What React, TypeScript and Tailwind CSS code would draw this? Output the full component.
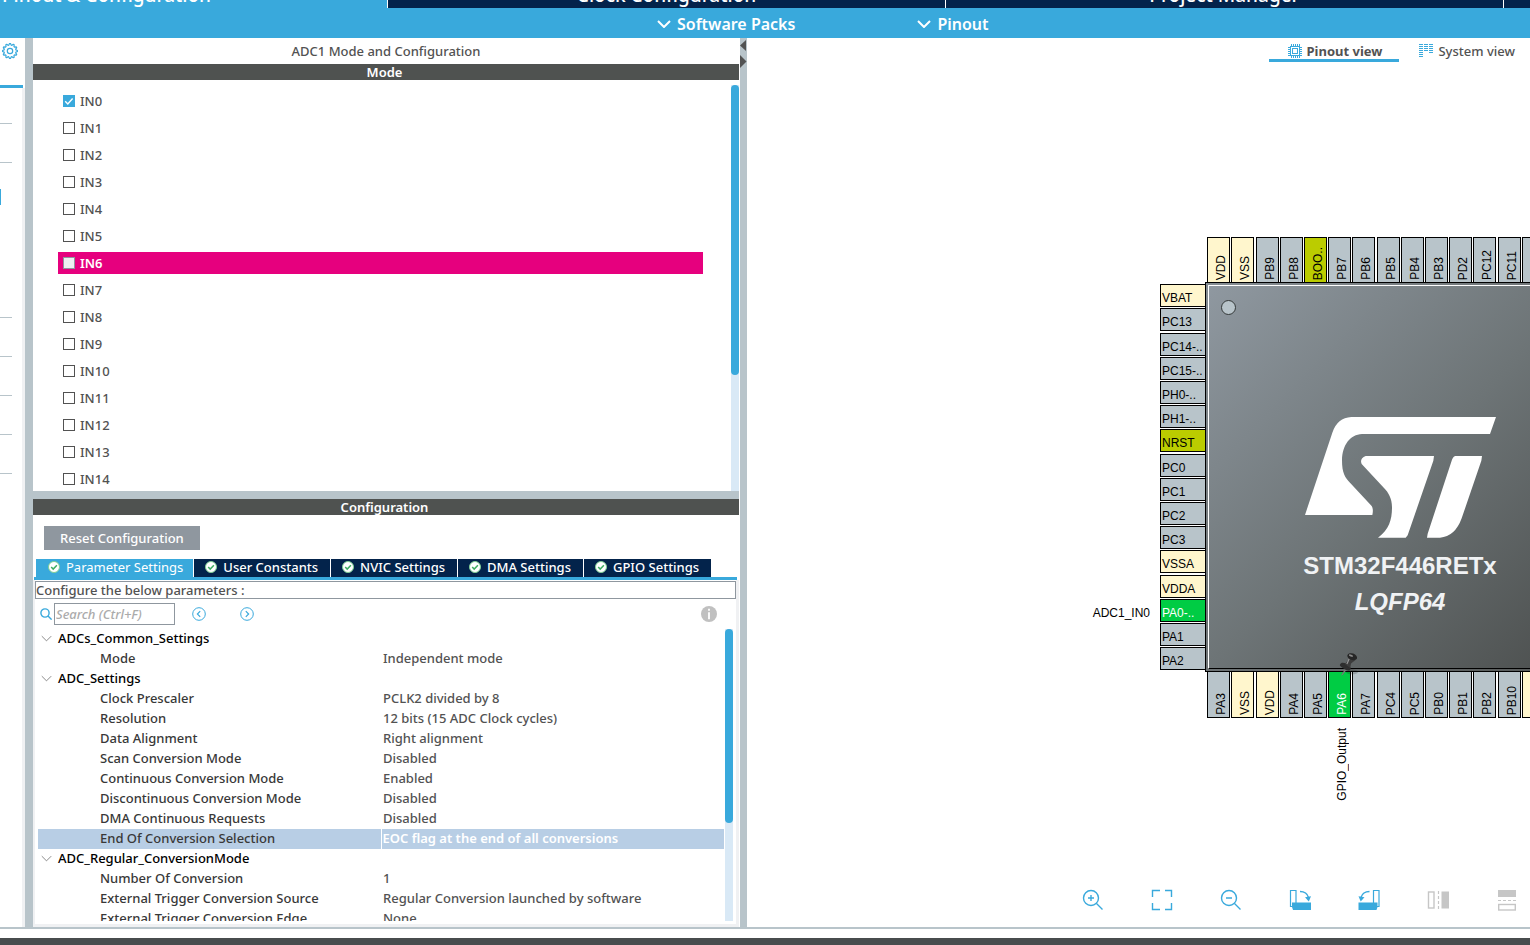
import React from "react";

const GRAY = "bg-[#b8c4ca]";

const GEAR_PATH = (() => {
  const points: string[] = [];
  const teeth = 12;
  for (let i = 0; i < teeth * 4; i++) {
    const angle = ((i - 0.5) / (teeth * 4)) * Math.PI * 2;
    const r = i % 4 < 2 ? 7.5 : 6;
    points.push(`${(8 + r * Math.cos(angle)).toFixed(2)},${(8 + r * Math.sin(angle)).toFixed(2)}`);
  }
  return `M${points.join("L")}Z`;
})();

function GearIcon() {
  return (
    <svg width="16" height="16" viewBox="0 0 16 16" fill="none" stroke="#39a9dc" strokeLinejoin="round">
      <path d={GEAR_PATH} strokeWidth="1.2" />
      <circle cx="8" cy="8" r="2.7" strokeWidth="1.2" />
    </svg>
  );
}

function Chevron({ className }: { className: string }) {
  return (
    <svg className={className} viewBox="0 0 14 8" fill="none" stroke="currentColor">
      <path d="M1 1l6 6 6-6" />
    </svg>
  );
}

function OkIcon() {
  return (
    <svg className="size-3 shrink-0" viewBox="0 0 12 12">
      <circle cx="6" cy="6" r="5.5" fill="#fff" stroke="#7fcf94" />
      <path d="M3.2 6l2 2.1 3.7-3.9" fill="none" stroke="#3fae62" strokeWidth="1.5" />
    </svg>
  );
}

const mainTabs = [
  { label: "Pinout & Configuration", active: true },
  { label: "Clock Configuration", active: false },
  { label: "Project Manager", active: false },
];

function Header() {
  return (
    <header className="shrink-0 text-white">
      <nav className="grid h-2 grid-cols-[388fr_558fr_558fr_26fr] overflow-hidden bg-[#03234b] text-[19px] font-medium">
        {mainTabs.map((t) => (
          <button
            key={t.label}
            className={
              t.active
                ? "flex h-2 items-end justify-start border-r border-white bg-[#39a9dc] pl-[2px] leading-[26px]"
                : "flex h-2 items-end justify-center border-r border-white leading-[26px]"
            }
          >
            {t.label}
          </button>
        ))}
        <span />
      </nav>
      <div className="flex h-[30px] items-center gap-[122px] bg-[#39a9dc] pt-px pl-[657px] font-semibold">
        {["Software Packs", "Pinout"].map((m) => (
          <button key={m} className="flex items-center gap-[6px] text-base">
            <Chevron className="h-2 w-[14px] stroke-2" />
            {m}
          </button>
        ))}
      </div>
    </header>
  );
}

function Sidebar() {
  return (
    <aside className="flex w-[25px] shrink-0 flex-col">
      <div className="h-[47px] shrink-0 pt-[5px] pl-[2px]">
        <button aria-label="Settings" className="block">
          <GearIcon />
        </button>
      </div>
      <div className="mr-[2px] h-[3px] shrink-0 bg-[#39a9dc]" />
      <div className="min-h-0 flex-1 border-r-[3px] border-[#f0f1f3] pr-[10px]">
        <div className="h-9 border-b border-[#b8c4ca]" />
        <div className="h-[39px] border-b border-[#b8c4ca]" />
        <div className="h-[155px] border-b border-[#b8c4ca] pt-[26px]">
          <div className="h-4 w-px bg-[#39a9dc]" />
        </div>
        <div className="h-[39px] border-b border-[#b8c4ca]" />
        <div className="h-[39px] border-b border-[#b8c4ca]" />
        <div className="h-[39px] border-b border-[#b8c4ca]" />
        <div className="h-[39px] border-b border-[#b8c4ca]" />
      </div>
    </aside>
  );
}

const channels = Array.from({ length: 15 }, (_, i) => `IN${i}`);

function ModePanel() {
  return (
    <section className="mr-px flex min-h-0 flex-[453] flex-col">
      <h1 className="h-[26px] shrink-0 text-center leading-[26px] font-medium text-[#525252]">ADC1 Mode and Configuration</h1>
      <h2 className="h-4 shrink-0 bg-[#4f5250] pr-[3px] text-center leading-4 font-semibold text-white">Mode</h2>
      <div className="flex min-h-0 flex-1 overflow-hidden">
        <ul className="flex flex-1 flex-col gap-[5px] pt-[10px] pr-7 pl-[25px]">
          {channels.map((c, i) => (
            <li key={c} className={i === 6 ? "bg-[#e6007e] font-semibold text-white" : "font-medium text-[#525252]"}>
              <label className="flex h-[22px] items-center gap-[5px] pl-[5px]">
                <span className="relative flex size-3">
                  <input
                    type="checkbox"
                    defaultChecked={i === 0}
                    className={
                      i === 6
                        ? "size-3 appearance-none border border-[#8f979f] bg-[#eef0f2]"
                        : "size-3 appearance-none border border-[#525252] bg-white checked:border-[#39a9dc] checked:bg-[#39a9dc]"
                    }
                  />
                  {i === 0 && (
                    <svg className="pointer-events-none absolute inset-0 size-3" viewBox="0 0 12 12" fill="none" stroke="#fff" strokeWidth="1.4">
                      <path d="M2.2 6.2l2.6 2.7 4.8-5.4" />
                    </svg>
                  )}
                </span>
                <span className="leading-5">{c}</span>
              </label>
            </li>
          ))}
        </ul>
        <div className="mt-[5px] w-2 bg-[#d9e9f6]">
          <div className="h-[290px] rounded-full bg-[#39a9dc]" />
        </div>
      </div>
    </section>
  );
}

const configTabs = ["Parameter Settings", "User Constants", "NVIC Settings", "DMA Settings", "GPIO Settings"];

type Row = { name: string; value?: string; selected?: boolean };

const rows: Row[] = [
  { name: "ADCs_Common_Settings" },
  { name: "Mode", value: "Independent mode" },
  { name: "ADC_Settings" },
  { name: "Clock Prescaler", value: "PCLK2 divided by 8" },
  { name: "Resolution", value: "12 bits (15 ADC Clock cycles)" },
  { name: "Data Alignment", value: "Right alignment" },
  { name: "Scan Conversion Mode", value: "Disabled" },
  { name: "Continuous Conversion Mode", value: "Enabled" },
  { name: "Discontinuous Conversion Mode", value: "Disabled" },
  { name: "DMA Continuous Requests", value: "Disabled" },
  { name: "End Of Conversion Selection", value: "EOC flag at the end of all conversions", selected: true },
  { name: "ADC_Regular_ConversionMode" },
  { name: "Number Of Conversion", value: "1" },
  { name: "External Trigger Conversion Source", value: "Regular Conversion launched by software" },
  { name: "External Trigger Conversion Edge", value: "None" },
];

function ParameterTable() {
  return (
    <table className="w-full table-fixed border-collapse">
      <tbody className="leading-[18px] font-medium">
        {rows.map((r) =>
          r.value === undefined ? (
            <tr key={r.name} className="h-5">
              <th colSpan={2} scope="rowgroup" className="p-0 text-left align-top font-medium text-black">
                <button className="flex items-center gap-[6px] pl-[3px]">
                  <Chevron className="h-[7px] w-[11px] text-[#6b6b6b]" />
                  {r.name}
                </button>
              </th>
            </tr>
          ) : (
            <tr key={r.name} className={r.selected ? "h-5 bg-[#b8cee5]" : "h-5"}>
              <th
                scope="row"
                className={
                  r.selected
                    ? "border-r border-white p-0 pl-[62px] text-left align-top font-medium text-[#383838]"
                    : "p-0 pl-[62px] text-left align-top font-medium text-[#383838]"
                }
              >
                {r.name}
              </th>
              <td className={r.selected ? "p-0 pl-px align-top font-semibold text-white" : "p-0 pl-[2px] align-top text-[#525252]"}>{r.value}</td>
            </tr>
          ),
        )}
      </tbody>
    </table>
  );
}

function ConfigPanel() {
  return (
    <section className="mr-px flex min-h-0 flex-[428] flex-col">
      <h2 className="h-4 shrink-0 bg-[#4f5250] pr-[3px] text-center leading-4 font-semibold text-white">Configuration</h2>
      <div className="shrink-0 pt-[11px] pl-[11px]">
        <button className="block h-6 bg-[#8f979f] px-4 pt-px font-medium text-white">Reset Configuration</button>
      </div>
      <div className="mt-[9px] mr-[2px] ml-px flex shrink-0 gap-px border-b-[3px] border-[#39a9dc] pl-[2px]">
        {configTabs.map((t, i) => (
          <button
            key={t}
            className={
              i === 0
                ? "flex h-[18px] items-center gap-[6px] bg-[#39a9dc] pr-[10px] pb-[2px] pl-3 leading-4 text-white"
                : "flex h-[18px] items-center gap-[6px] bg-[#03234b] pr-3 pb-[2px] pl-[11px] leading-4 font-medium text-white"
            }
          >
            <OkIcon />
            {t}
          </button>
        ))}
      </div>
      <div className="flex min-h-0 flex-1 flex-col border-r-[3px] border-b-[3px] border-l-2 border-[#f0f1f3] pb-[3px]">
        <p className="mt-px h-[18px] shrink-0 border border-[#8f979f] leading-4 font-medium text-[#525252]">Configure the below parameters :</p>
        <div className="flex h-[30px] shrink-0 items-center pr-[19px] pl-[5px]">
          <svg className="mr-[2px] size-3" viewBox="0 0 12 12" fill="none" stroke="#39a9dc" strokeWidth="1.4">
            <circle cx="5" cy="5" r="4.1" />
            <path d="M8 8l3.6 3.6" />
          </svg>
          <input
            type="search"
            aria-label="Search parameters"
            placeholder="Search (Ctrl+F)"
            className="h-[22px] w-[121px] border border-[#8f979f] px-px font-medium italic placeholder:text-[#ababab]"
          />
          <button aria-label="Previous match" className="ml-[17px]">
            <svg className="size-[14px]" viewBox="0 0 14 14" fill="none" stroke="#39a9dc">
              <circle cx="7" cy="7" r="6.3" />
              <path d="M8.2 4.2L5.4 7l2.8 2.8" strokeWidth="1.2" />
            </svg>
          </button>
          <button aria-label="Next match" className="ml-[34px]">
            <svg className="size-[14px]" viewBox="0 0 14 14" fill="none" stroke="#39a9dc">
              <circle cx="7" cy="7" r="6.3" />
              <path d="M5.8 4.2L8.6 7 5.8 9.8" strokeWidth="1.2" />
            </svg>
          </button>
          <button aria-label="Information" className="ml-auto">
            <svg className="size-4" viewBox="0 0 16 16">
              <circle cx="8" cy="8" r="8" fill="#c0c0c0" />
              <path d="M8 6.2v7M8 2.8v2" stroke="#fff" strokeWidth="1.8" />
            </svg>
          </button>
        </div>
        <div className="flex min-h-0 flex-1 gap-px overflow-hidden px-[3px]">
          <div className="min-w-0 flex-1 overflow-hidden">
            <ParameterTable />
          </div>
          <div className="w-2 bg-[#d9e9f6]">
            <div className="h-[194px] rounded-full bg-[#39a9dc]" />
          </div>
        </div>
      </div>
    </section>
  );
}

type PinKind = "io" | "power" | "reset" | "active";
type PinDef = [label: string, kind: PinKind];

const pinColors: Record<PinKind, string> = {
  io: "bg-[#b8c4ca] text-black",
  power: "bg-[#fff6cd] text-black",
  reset: "bg-[#bbcc00] text-black",
  active: "bg-[#00cc44] text-white",
};

const topPins: PinDef[] = [
  ["VDD", "power"], ["VSS", "power"], ["PB9", "io"], ["PB8", "io"], ["BOO..", "reset"], ["PB7", "io"], ["PB6", "io"],
  ["PB5", "io"], ["PB4", "io"], ["PB3", "io"], ["PD2", "io"], ["PC12", "io"], ["PC11", "io"], ["", "io"],
];
const leftPins: PinDef[] = [
  ["VBAT", "power"], ["PC13", "io"], ["PC14-..", "io"], ["PC15-..", "io"], ["PH0-..", "io"], ["PH1-..", "io"],
  ["NRST", "reset"], ["PC0", "io"], ["PC1", "io"], ["PC2", "io"], ["PC3", "io"], ["VSSA", "power"], ["VDDA", "power"],
  ["PA0-..", "active"], ["PA1", "io"], ["PA2", "io"],
];
const bottomPins: PinDef[] = [
  ["PA3", "io"], ["VSS", "power"], ["VDD", "power"], ["PA4", "io"], ["PA5", "io"], ["PA6", "active"], ["PA7", "io"],
  ["PC4", "io"], ["PC5", "io"], ["PB0", "io"], ["PB1", "io"], ["PB2", "io"], ["PB10", "io"], ["", "power"],
];

const pinOffset = (i: number) => Math.round(i * 24.2 + 0.15);

function ChipDiagram() {
  return (
    <div className="absolute top-[199px] left-[413px] size-[481px] font-['Liberation_Sans',sans-serif] text-xs text-black">
      {topPins.map(([label, kind], i) => (
        <div
          key={i}
          className={`absolute top-0 flex h-[46px] w-[23px] items-end border border-black pb-[2px] pl-[5px] ${pinColors[kind]}`}
          style={{ left: 47 + pinOffset(i) }}
        >
          <span className="rotate-180 leading-4 [writing-mode:vertical-rl]">{label}</span>
        </div>
      ))}
      {bottomPins.map(([label, kind], i) => (
        <div
          key={i}
          className={`absolute top-[434px] flex h-[47px] w-[23px] items-end border border-black pb-[2px] pl-[5px] ${pinColors[kind]}`}
          style={{ left: 47 + pinOffset(i) }}
        >
          <span className="rotate-180 leading-4 [writing-mode:vertical-rl]">{label}</span>
        </div>
      ))}
      {leftPins.map(([label, kind], i) => (
        <div
          key={i}
          className={`absolute left-0 h-[23px] w-[46px] border border-black pt-[5px] pl-px leading-4 ${pinColors[kind]}`}
          style={{ top: 47 + pinOffset(i) }}
        >
          {label}
        </div>
      ))}
      <span className="absolute top-[368px] right-[491px] leading-4">ADC1_IN0</span>
      <span className="absolute top-[491px] left-[174px] rotate-180 leading-4 [writing-mode:vertical-rl]">GPIO_Output</span>

      <div className="absolute top-[45px] left-[45px] size-[390px] border border-black bg-linear-to-br from-[#858d92] to-[#555857] p-[2px]">
        <div className="relative flex size-full flex-col items-center border border-t-white border-r-black border-b-black border-l-white bg-linear-to-br from-[#8f98a0] via-[#6d7476] to-[#4a4d4c] pt-[131px]">
          <div className="absolute top-[14px] left-[12px] size-[15px] rounded-full border border-[#333838] bg-[#b8c4ca]" />
          <svg className="h-[121px] w-[191px]" viewBox="75 81 573 363" fill="#fff" aria-label="ST">
            <path d="M75 375L157 128Q172 83 214 81H648L630 132H246C210 134 187 165 186 210C186 250 195 262 210 278L275 348Q281 358 277 375Z" />
            <path d="M257 198H462L460 212 383 436 377 443H294C328 418 336 388 336 352C336 325 325 307 312 294L245 222Q238 206 257 198Z" />
            <path d="M526 198H606L604 212 545 385Q525 440 480 443H441L443 431 514 215Q518 200 526 198Z" />
          </svg>
          <p className="mt-[10px] text-2xl leading-9 font-bold text-[#f0f2f4]">STM32F446RETx</p>
          <p className="text-2xl leading-9 font-bold text-[#f0f2f4] italic">LQFP64</p>
        </div>
      </div>

      <svg className="absolute top-[415px] left-[178px] h-6 w-5" viewBox="0 0 20 24">
        <ellipse cx="14" cy="20" rx="6" ry="2.6" fill="#000" opacity=".18" />
        <path d="M8.5 14.5L3 23.5l1.6-.6L10 16z" fill="#777" />
        <path d="M2 12.5c1-2.4 4-2 6.5-.5 2.8 1.6 5 3.6 4 5.6-1.2 1.6-4.5.8-7-1.1-2.6-1.7-4.2-2.8-3.5-4z" fill="#2e2e2e" />
        <path d="M10.5 3l7 5-4.5 3.5-.8 4.5-5.4-4 3.3-4z" fill="#3c3c3c" />
        <path d="M11.5 6l-2.6 6" stroke="#999" strokeWidth="1.2" />
        <ellipse cx="14.2" cy="4.7" rx="5" ry="3.3" transform="rotate(20 14.2 4.7)" fill="#262626" />
        <ellipse cx="13" cy="3.6" rx="2.2" ry="1" transform="rotate(20 13 3.6)" fill="#8a8a8a" />
      </svg>
    </div>
  );
}

function ChipIcon() {
  return (
    <svg className="size-[14px]" viewBox="0 0 14 14" fill="none" stroke="#39a9dc" shapeRendering="crispEdges">
      <rect x="2.5" y="2.5" width="9" height="9" />
      <rect x="4.5" y="4.5" width="5" height="5" />
      <path d="M3 1h9M3 13h9" strokeWidth="2" strokeDasharray="1 1" />
      <path d="M1 3v9M13 3v9" strokeWidth="2" strokeDasharray="1 1" />
    </svg>
  );
}

function SystemIcon() {
  return (
    <svg className="size-[14px]" viewBox="0 0 14 14" fill="none" stroke="#39a9dc" strokeWidth="4" shapeRendering="crispEdges">
      <path d="M2 0v14" strokeDasharray="1 1" />
      <path d="M7 0v8" strokeDasharray="1 1" />
      <path d="M12 0v10" strokeDasharray="1 1" />
    </svg>
  );
}

const rotateArt = (
  <g>
    <path d="M1.5 1.5H7v16H1.5z" fill="none" stroke="#39a9dc" strokeWidth="1.2" />
    <path d="M3 13.5h19V21H4l-1-3z" fill="#39a9dc" />
    <path d="M11 2.5c5 0 7.5 2.5 8.5 6" fill="none" stroke="#39a9dc" strokeWidth="1.4" />
    <path d="M16 8.2l6-1-2.2 5.3z" fill="#39a9dc" />
  </g>
);

const tools: { name: string; art: React.ReactNode }[] = [
  {
    name: "Zoom in",
    art: (
      <g fill="none" stroke="#39a9dc" strokeWidth="1.4">
        <circle cx="9" cy="9" r="7.5" />
        <path d="M14.5 14.5l6 6M9 6v6M6 9h6" />
      </g>
    ),
  },
  {
    name: "Fit to window",
    art: <path d="M1.5 8V1.5H9M14 1.5h6.5V8M20.5 14v6.5H14M9 20.5H1.5V14" fill="none" stroke="#39a9dc" strokeWidth="1.4" />,
  },
  {
    name: "Zoom out",
    art: (
      <g fill="none" stroke="#39a9dc" strokeWidth="1.4">
        <circle cx="9" cy="9" r="7.5" />
        <path d="M14.5 14.5l6 6M6 9h6" />
      </g>
    ),
  },
  { name: "Rotate clockwise", art: rotateArt },
  { name: "Rotate counterclockwise", art: <g transform="translate(22.5 0) scale(-1 1)">{rotateArt}</g> },
  {
    name: "Flip horizontally",
    art: (
      <g stroke="#c6c6c6">
        <rect x="1.5" y="3" width="5.5" height="16" fill="none" strokeWidth="1.4" />
        <path d="M11.5 2v18" strokeDasharray="3 2" strokeWidth="1.2" />
        <rect x="15" y="3" width="6.5" height="16" fill="#c6c6c6" />
      </g>
    ),
  },
  {
    name: "Flip vertically",
    art: (
      <g stroke="#c6c6c6">
        <rect x="2.5" y="1.5" width="17" height="6" fill="#c6c6c6" />
        <path d="M2 11.5h18" strokeDasharray="3 2" strokeWidth="1.2" />
        <rect x="2.7" y="15.5" width="16.6" height="5.5" fill="none" strokeWidth="1.4" />
      </g>
    ),
  },
];

function PinoutPane() {
  return (
    <main className="relative flex min-w-0 flex-[783] flex-col justify-between overflow-hidden">
      <nav className="relative z-10 flex justify-end gap-5 pr-[15px] leading-5 text-[#525252]">
        <button className="flex h-6 w-[130px] items-center justify-center gap-1 border-b-[3px] border-[#39a9dc] pt-[5px] pl-[2px] font-bold">
          <ChipIcon />
          Pinout view
        </button>
        <button className="flex h-6 items-center gap-[5px] pt-[2px] font-medium">
          <SystemIcon />
          System view
        </button>
      </nav>
      <ChipDiagram />
      <div className="relative flex justify-end gap-[47px] pr-3 pb-4">
        {tools.map((t) => (
          <button key={t.name} aria-label={t.name} className="size-[22px]">
            <svg className="size-[22px]" viewBox="0 0 22 22">
              {t.art}
            </svg>
          </button>
        ))}
      </div>
    </main>
  );
}

export default function App() {
  return (
    <div className="flex h-screen flex-col overflow-hidden bg-white font-['Noto_Sans','Open_Sans',sans-serif] text-[13px]">
      <Header />
      <div className="flex min-h-0 flex-1 border-b-2 border-[#b8c4ca]">
        <Sidebar />
        <div className={`w-2 shrink-0 ${GRAY}`} />
        <div className="flex min-w-0 flex-[707] flex-col">
          <ModePanel />
          <div className={`mr-px h-2 shrink-0 ${GRAY}`} />
          <ConfigPanel />
        </div>
        <div className={`w-[7px] shrink-0 ${GRAY}`}>
          <button aria-label="Collapse panel" className="mt-[2px] block">
            <svg className="h-[11px] w-[7px]" viewBox="0 0 7 11" fill="#525252">
              <path d="M0 5.5L6 0v11z" />
            </svg>
          </button>
          <button aria-label="Expand panel" className="mt-1 block">
            <svg className="h-[13px] w-[7px]" viewBox="0 0 7 13" fill="#525252">
              <path d="M6.5 6.5L0 0v13z" />
            </svg>
          </button>
        </div>
        <PinoutPane />
      </div>
      <footer className="mt-[9px] h-[7px] shrink-0 bg-[#484c4e]" />
    </div>
  );
}
